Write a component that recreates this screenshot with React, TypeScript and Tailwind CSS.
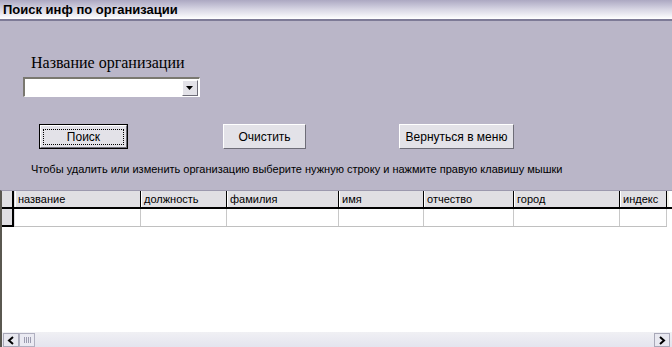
import React from "react";

const cols = [
  { name: "название", w: 126 },
  { name: "должность", w: 86 },
  { name: "фамилия", w: 112 },
  { name: "имя", w: 85 },
  { name: "отчество", w: 90 },
  { name: "город", w: 106 },
  { name: "индекс", w: 47 },
];

function Btn({ label, x, w, def }: { label: string; x: number; w: number; def?: boolean }) {
  return (
    <div
      className={`absolute top-0 h-[25px] ${def ? "border border-black" : ""}`}
      style={{ left: x, width: w }}
    >
      <div className="w-full h-full bg-[#e3e2e8] border-t border-l border-t-white border-l-white border-b border-r border-b-[#6e6d78] border-r-[#6e6d78] flex items-center justify-center">
        <div
          className={`px-[2px] text-[12px] leading-[14px] text-black ${def ? "outline outline-1 outline-dotted outline-black w-[calc(100%-6px)] text-center" : ""}`}
        >
          {label}
        </div>
      </div>
    </div>
  );
}

export default function App() {
  return (
    <div
      className="w-[672px] h-[347px] overflow-hidden flex flex-col bg-[#bab6c8]"
      style={{ fontFamily: '"Liberation Sans", Arial, sans-serif' }}
    >
      <div className="h-[19px] shrink-0 bg-gradient-to-b from-[#aca8c2] via-[#d8d6e4] to-white flex items-center pl-[3px]">
        <span className="text-[13px] font-bold text-black leading-none">Поиск инф по организации</span>
      </div>
      <div className="h-[2px] shrink-0 bg-[#7d7a96]" />
      <div className="h-[169px] shrink-0 flex flex-col">
        <div
          className="mt-[33px] ml-[31px] text-[16px] leading-[18px] text-black"
          style={{ fontFamily: '"Liberation Serif", "Times New Roman", serif' }}
        >
          Название организации
        </div>
        <div className="mt-[5px] ml-[23px] w-[177px] h-[20px] bg-white border-t-2 border-l-2 border-t-[#7a7870] border-l-[#7a7870] border-b border-r border-b-white border-r-white flex justify-end items-start">
          <div className="mt-[1px] mr-[1px] w-[16px] h-[16px] bg-[#e3e2e8] border-t border-l border-t-white border-l-white border-b border-r border-b-[#6e6d78] border-r-[#6e6d78] flex items-center justify-center">
            <svg width="8" height="5" viewBox="0 0 8 5">
              <polygon points="0,0 7,0 3.5,4" fill="black" />
            </svg>
          </div>
        </div>
        <div className="relative mt-[27px] h-[25px]">
          <Btn label="Поиск" x={39} w={89} def />
          <Btn label="Очистить" x={223} w={83} />
          <Btn label="Вернуться в меню" x={399} w={115} />
        </div>
        <div className="mt-[14px] ml-[31px] text-[11px] leading-[13px] text-black">
          Чтобы удалить или изменить организацию выберите нужную строку и нажмите правую клавишу мышки
        </div>
      </div>
      <div className="flex-1 flex flex-col bg-white border-l-2 border-l-[#5a5850] border-t border-t-[#9c99ae]">
        <div className="flex-1 flex flex-col">
          <div className="flex h-[18px] border-b-2 border-b-black">
            <div className="w-[12px] bg-[#e0dfe3] border-r-2 border-r-black shrink-0" />
            <div className="w-[1px] bg-[#e0dfe3]" />
            {cols.map((c) => (
              <div
                key={c.name}
                className="shrink-0 bg-[#e0dfe3] border-l border-l-white border-r border-r-black text-[11px] leading-[17px] pl-[2px] text-black"
                style={{ width: c.w }}
              >
                {c.name}
              </div>
            ))}
            <div className="w-[2px] bg-[#f2f2ea]" />
          </div>
          <div className="flex h-[18px]">
            <div className="w-[12px] bg-[#e0dfe3] border-r-2 border-r-black border-b-2 border-b-black shrink-0" />
            <div className="w-[1px] bg-[#e0dfe3] border-b border-b-[#c0c0c0]" />
            <div className="flex border-b border-b-[#c0c0c0]">
              {cols.map((c) => (
                <div key={c.name} className="shrink-0 border-r border-r-[#c8c8c8]" style={{ width: c.w }} />
              ))}
            </div>
          </div>
        </div>
        <div className="h-[15px] shrink-0 bg-gradient-to-b from-[#f0f0f4] to-[#e4e4ee] flex items-end pb-0">
          <div className="w-[16px] h-[14px] ml-[1px] bg-[#e8e8f0] border border-[#a8a8b8] flex items-center justify-center">
            <svg width="8" height="9" viewBox="0 0 8 9">
              <polyline points="6,1 2,4.5 6,8" fill="none" stroke="black" strokeWidth="2" />
            </svg>
          </div>
          <div className="w-[16px] h-[14px] bg-[#eaeaf2] border border-[#b0b0c0] flex items-center justify-center gap-[1px]">
            <div className="w-[1px] h-[6px] bg-[#9c9cb0]" />
            <div className="w-[1px] h-[6px] bg-[#9c9cb0]" />
            <div className="w-[1px] h-[6px] bg-[#9c9cb0]" />
            <div className="w-[1px] h-[6px] bg-[#9c9cb0]" />
          </div>
          <div className="flex-1" />
          <div className="w-[16px] h-[14px] mr-[2px] bg-[#e8e8f0] border border-[#a8a8b8] flex items-center justify-center">
            <svg width="8" height="9" viewBox="0 0 8 9">
              <polyline points="2,1 6,4.5 2,8" fill="none" stroke="black" strokeWidth="2" />
            </svg>
          </div>
        </div>
      </div>
    </div>
  );
}
